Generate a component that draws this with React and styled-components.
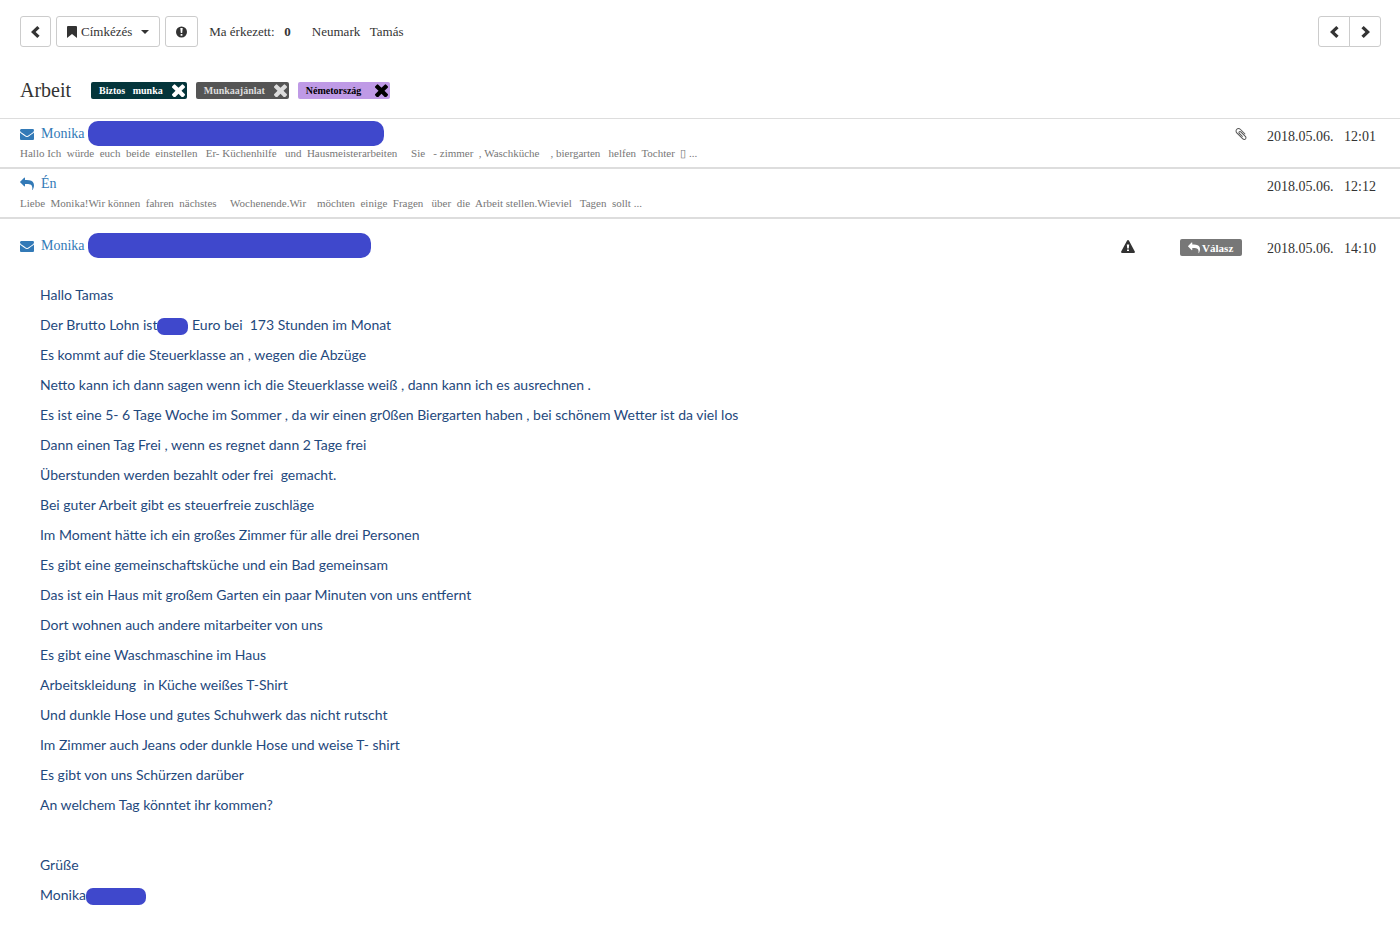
import styled, { createGlobalStyle } from "styled-components"

const GlobalStyle = createGlobalStyle`
    * {
        box-sizing: border-box;
    }

    body {
        margin: 0;
        background-color: white;
        color: #333;
        font-family: "Liberation Serif", "Times New Roman", serif;
    }

    button {
        font-family: inherit;
        cursor: pointer;
    }
`;

const Icon = styled.svg`
    display: block;
    flex: none;
    width: ${({ $width }) => $width}px;
    height: ${({ $height }) => $height}px;
    fill: currentColor;
`;

const Toolbar = styled.header`
    display: flex;
    align-items: center;
    gap: 5px;
    padding: 16px 19px 16px 20px;
`;

const ToolButton = styled.button`
    display: flex;
    align-items: center;
    justify-content: center;
    gap: 4px;
    height: 31px;
    min-width: 31px;
    padding: 0 10px;
    border: 1px solid #ccc;
    border-radius: 3px;
    background-color: white;
    color: #333;
    font-size: 13px;
`;

const Caret = styled.span`
    margin-left: 5px;
    border-top: 4px solid #333;
    border-left: 4px solid transparent;
    border-right: 4px solid transparent;
`;

const Status = styled.p`
    margin: 0 0 0 6px;
    font-size: 13px;
    white-space: pre;
`;

const User = styled(Status)`
    margin-left: 16px;
`;

const Pager = styled.div`
    display: flex;
    margin-left: auto;

    button {
        width: 32px;
    }

    button:first-child {
        border-radius: 3px 0 0 3px;
    }

    button:last-child {
        margin-left: -1px;
        border-radius: 0 3px 3px 0;
    }
`;

const Subject = styled.div`
    display: flex;
    align-items: center;
    height: 56px;
    padding: 0 20px;
    border-bottom: 1px solid #ddd;

    h1 {
        margin: 0 20px 0 0;
        font-size: 20px;
        font-weight: 400;
    }
`;

const Labels = styled.ul`
    display: flex;
    gap: 9px;
    margin: 0;
    padding: 0;
    list-style: none;
`;

const Label = styled.li`
    display: flex;
    align-items: center;
    justify-content: space-between;
    gap: 9px;
    height: 17px;
    padding: 0 2px 0 8px;
    border-radius: 2px;
    background-color: ${({ $background }) => $background};
    color: ${({ $color }) => $color};
    font-size: 10px;
    font-weight: 700;
    white-space: pre;

    button {
        padding: 0;
        border: none;
        background: none;
        color: inherit;
    }
`;

const Message = styled.article`
    display: flex;
    justify-content: space-between;
    padding: ${({ $open }) => ($open ? "14px" : "2px")} 24px 7px 20px;
    border-bottom: ${({ $open }) => ($open ? "none" : "2px solid #ddd")};
`;

const Sender = styled.a`
    display: flex;
    align-items: center;
    height: 25px;
    color: #337ab7;
    font-size: 14px;
    text-decoration: none;

    svg {
        margin-right: 7px;
    }
`;

const Preview = styled.p`
    margin: 0;
    color: #777;
    font-size: 11px;
    line-height: 14px;
    white-space: pre;
`;

const Redacted = styled.span`
    display: inline-block;
    flex: none;
    width: ${({ $width }) => $width}px;
    height: 25px;
    margin-left: 3px;
    border-radius: 10px;
    background-color: #3f48cc;
`;

const RedactedWord = styled(Redacted)`
    height: 17px;
    margin-left: 0;
    border-radius: 7px;
    vertical-align: middle;
`;

const Meta = styled.div`
    display: flex;
    align-items: center;
    height: 25px;
    margin-top: 3px;
`;

const Attachment = styled.span`
    margin: 0 19px 6px 0;
    color: #555;
`;

const Report = styled.button`
    margin: 0 45px 4px 0;
    padding: 0;
    border: none;
    background: none;
    color: #333;
`;

const Reply = styled.button`
    display: flex;
    align-items: center;
    gap: 2px;
    width: 62px;
    height: 17px;
    margin: 0 25px 2px 0;
    padding: 0 8px;
    border: none;
    border-radius: 2px;
    background-color: #777;
    color: white;
    font-size: 11px;
    font-weight: 700;
`;

const Time = styled.time`
    font-size: 14px;
    white-space: pre;
`;

const Body = styled.section`
    padding: 17px 40px 20px;
    color: #1f497d;
    font-family: Lato, Calibri, sans-serif;
    font-size: 14px;
    line-height: 20px;

    p {
        height: 20px;
        margin: 0 0 10px;
        white-space: pre;
    }
`;

const Chevron = ({ right }) => (
    <Icon $width={9} $height={12} viewBox="0 0 9 12">
        <path d={right ? "M2.7 0 9 6 2.7 12 .4 9.8 4.4 6 .4 2.2z" : "M6.3 0 0 6l6.3 6 2.3-2.2L4.6 6l4-3.8z"} />
    </Icon>
)

const Bookmark = () => (
    <Icon $width={10} $height={12} viewBox="0 0 10 12">
        <path d="M1 0h8a1 1 0 0 1 1 1v11L5 8 0 12V1a1 1 0 0 1 1-1z" />
    </Icon>
)

const Exclamation = () => (
    <Icon $width={11} $height={12} viewBox="0 0 11 12">
        <path fillRule="evenodd" d="M5.5.5a5.5 5.5 0 1 1 0 11 5.5 5.5 0 0 1 0-11zM4.3 2l.5 5h1.4l.5-5zM4.6 8v1.8h1.8V8z" />
    </Icon>
)

const Cross = () => (
    <Icon $width={13} $height={13} viewBox="302 334 1188 1188">
        <path d="M1490 1322q0 40-28 68l-136 136q-28 28-68 28t-68-28l-294-294-294 294q-28 28-68 28t-68-28l-136-136q-28-28-28-68t28-68l294-294-294-294q-28-28-28-68t28-68l136-136q28-28 68-28t68 28l294 294 294-294q28-28 68-28t68 28l136 136q28 28 28 68t-28 68l-294 294 294 294q28 28 28 68z" />
    </Icon>
)

const Envelope = () => (
    <Icon $width={14} $height={14} viewBox="0 0 1792 1792">
        <path d="M1792 710v794q0 66-47 113t-113 47h-1472q-66 0-113-47t-47-113v-794q44 49 101 87 362 246 497 345 57 42 92.5 65.5t94.5 48 110 24.5h2q51 0 110-24.5t94.5-48 92.5-65.5q170-123 498-345 57-39 100-87zm0-294q0 79-49 151t-122 123q-376 261-468 325-10 7-42.5 31t-54 38.5-52 32.5-57.5 27-50 9h-2q-23 0-50-9t-57.5-27-52-32.5-54-38.5-42.5-31q-91-64-262-182.5t-205-142.5q-62-42-117-115.5t-55-136.5q0-78 41.5-130t118.5-52h1472q65 0 112.5 47t47.5 113z" />
    </Icon>
)

const ReplyArrow = ({ size }) => (
    <Icon $width={size} $height={size} viewBox="0 0 1792 1792">
        <path d="M1792 1120q0 166-127 451-3 7-10.5 24t-13.5 30-13 22q-12 17-28 17-15 0-23.5-10t-8.5-25q0-9 2.5-26.5t2.5-23.5q5-68 5-123 0-101-17.5-181t-48.5-138.5-80-101-105.5-69.5-133-42.5-154-21.5-175.5-6h-224v256q0 26-19 45t-45 19-45-19l-512-512q-19-19-19-45t19-45l512-512q19-19 45-19t45 19 19 45v256h224q713 0 875 403 53 134 53 333z" />
    </Icon>
)

const Paperclip = () => (
    <Icon $width={14} $height={14} viewBox="0 0 1792 1792">
        <path d="M1596 1385q0 117-79 196t-196 79q-135 0-235-100l-777-776q-113-115-113-271 0-159 110-270t269-111q158 0 273 113l605 606q10 10 10 22 0 16-30.5 46.5t-46.5 30.5q-13 0-23-10l-606-607q-79-77-181-77-106 0-179 75t-73 181q0 105 76 181l776 777q63 63 145 63 64 0 106-42t42-106q0-82-63-145l-581-581q-26-24-60-24-29 0-48 19t-19 48q0 32 25 59l410 410q10 10 10 22 0 16-31 47t-47 31q-12 0-22-10l-410-410q-63-61-63-149 0-82 57-139t139-57q88 0 149 63l581 581q100 98 100 235z" />
    </Icon>
)

const Warning = () => (
    <Icon $width={14} $height={13} viewBox="0 0 14 13">
        <path fillRule="evenodd" d="M6.1.6a1 1 0 0 1 1.8 0l5.9 10.9a1 1 0 0 1-.9 1.5H1.1a1 1 0 0 1-.9-1.5zM5.8 4.5l.4 4h1.6l.4-4zM6 9.4v1.7h2V9.4z" />
    </Icon>
)

const labels = [
    { name: "Biztos   munka", background: "#04353b", color: "#fff" },
    { name: "Munkaajánlat", background: "#555", color: "#ddd" },
    { name: "Németország  ", background: "#bf9ae6", color: "#000" },
]

const App = () => {
    return (
        <>
            <GlobalStyle />
            <Toolbar>
                <ToolButton aria-label="Vissza"><Chevron /></ToolButton>
                <ToolButton><Bookmark />Címkézés<Caret /></ToolButton>
                <ToolButton aria-label="Spam"><Exclamation /></ToolButton>
                <Status>Ma érkezett:   <b>0</b></Status>
                <User>Neumark   Tamás</User>
                <Pager>
                    <ToolButton aria-label="Előző"><Chevron /></ToolButton>
                    <ToolButton aria-label="Következő"><Chevron right /></ToolButton>
                </Pager>
            </Toolbar>
            <Subject>
                <h1>Arbeit</h1>
                <Labels>
                    {labels.map((label) => (
                        <Label key={label.name} $background={label.background} $color={label.color}>
                            {label.name}
                            <button aria-label="Címke törlése"><Cross /></button>
                        </Label>
                    ))}
                </Labels>
            </Subject>
            <main>
                <Message>
                    <div>
                        <Sender href="#"><Envelope />Monika<Redacted $width={296} /></Sender>
                        <Preview>{"Hallo Ich  würde  euch  beide  einstellen   Er- Küchenhilfe   und  Hausmeisterarbeiten     Sie   - zimmer  , Waschküche    , biergarten   helfen  Tochter  ▯ ..."}</Preview>
                    </div>
                    <Meta>
                        <Attachment><Paperclip /></Attachment>
                        <Time>2018.05.06.   12:01</Time>
                    </Meta>
                </Message>
                <Message>
                    <div>
                        <Sender href="#"><ReplyArrow size={14} />Én</Sender>
                        <Preview>{"Liebe  Monika!Wir können  fahren  nächstes     Wochenende.Wir    möchten  einige  Fragen   über  die  Arbeit stellen.Wieviel   Tagen  sollt ..."}</Preview>
                    </div>
                    <Meta>
                        <Time>2018.05.06.   12:12</Time>
                    </Meta>
                </Message>
                <Message $open>
                    <Sender href="#"><Envelope />Monika<Redacted $width={283} /></Sender>
                    <Meta>
                        <Report aria-label="Jelentés"><Warning /></Report>
                        <Reply><ReplyArrow size={12} />Válasz</Reply>
                        <Time>2018.05.06.   14:10</Time>
                    </Meta>
                </Message>
                <Body>
                    <p>Hallo Tamas</p>
                    <p>Der Brutto Lohn ist<RedactedWord $width={31} /> Euro bei  173 Stunden im Monat</p>
                    <p>Es kommt auf die Steuerklasse an , wegen die Abzüge</p>
                    <p>Netto kann ich dann sagen wenn ich die Steuerklasse weiß , dann kann ich es ausrechnen .</p>
                    <p>Es ist eine 5- 6 Tage Woche im Sommer , da wir einen gr0ßen Biergarten haben , bei schönem Wetter ist da viel los</p>
                    <p>Dann einen Tag Frei , wenn es regnet dann 2 Tage frei</p>
                    <p>Überstunden werden bezahlt oder frei  gemacht.</p>
                    <p>Bei guter Arbeit gibt es steuerfreie zuschläge</p>
                    <p>Im Moment hätte ich ein großes Zimmer für alle drei Personen</p>
                    <p>Es gibt eine gemeinschaftsküche und ein Bad gemeinsam</p>
                    <p>Das ist ein Haus mit großem Garten ein paar Minuten von uns entfernt</p>
                    <p>Dort wohnen auch andere mitarbeiter von uns</p>
                    <p>Es gibt eine Waschmaschine im Haus</p>
                    <p>Arbeitskleidung  in Küche weißes T-Shirt</p>
                    <p>Und dunkle Hose und gutes Schuhwerk das nicht rutscht</p>
                    <p>Im Zimmer auch Jeans oder dunkle Hose und weise T- shirt</p>
                    <p>Es gibt von uns Schürzen darüber</p>
                    <p>An welchem Tag könntet ihr kommen?</p>
                    <p />
                    <p>Grüße</p>
                    <p>Monika<RedactedWord $width={60} /></p>
                </Body>
            </main>
        </>
    )
}

export default App;
